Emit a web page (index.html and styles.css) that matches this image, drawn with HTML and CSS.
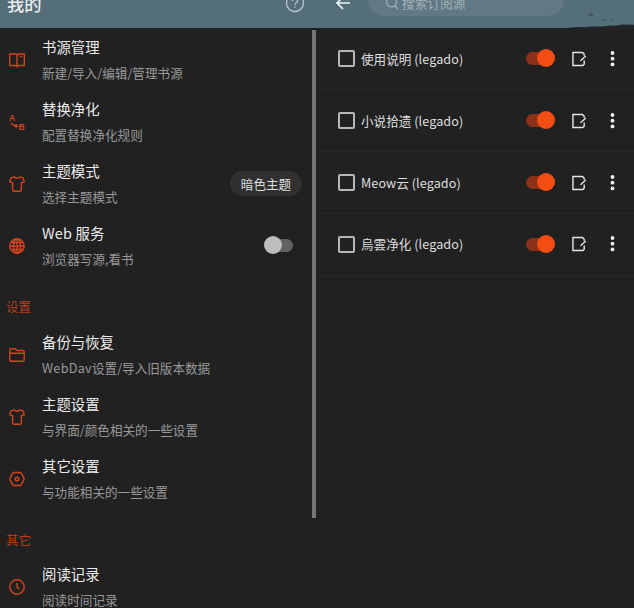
FILE: index.html
```html
<!DOCTYPE html>
<html lang="zh-CN">
<head>
<meta charset="utf-8">
<title>我的</title>
<link rel="stylesheet" href="styles.css">
</head>
<body>
<svg class="defs" aria-hidden="true">
  <symbol id="shirt" viewBox="0 0 16 16"><path d="M5.2.8C6 2.700 10 2.700 10.800.8L14 1.800l1.300 4.100-2.900.7v7.200q0 1.400-1.400 1.400H5q-1.400 0-1.400-1.400V6.600L.7 5.900 2 1.800z"/></symbol>
  <symbol id="edit" viewBox="0 0 16 16"><path d="M13 4.500V3l-1.800-2H1v14h10.500l1.500-1.500V9.500M14.800 4.800 9 9.800"/></symbol>
</svg>
<div class="app">
  <main class="pane mine">
    <header class="bar"><h1>我的</h1>
      <svg class="help" viewBox="0 0 20 20"><circle cx="10" cy="10" r="8.500"/><path d="M7.500 8c0-3.200 5-3.200 5-.3 0 1.900-2.500 2-2.500 4.300M10 13.500v1.200"/></svg>
    </header>
    <div class="row"><svg class="ico" viewBox="0 0 16 16"><path d="M8 3v12M.7 2h5Q8 2 8 3.500 8 2 10.300 2h5v11.500h-5Q8 13.500 8 15q0-1.500-2.300-1.500h-5zM11 4.500h2"/></svg><div class="txt"><h2>书源管理</h2><p>新建/导入/编辑/管理书源</p></div></div>
    <div class="row"><svg class="ico letters" viewBox="0 0 16 16"><text x="0" y="6.500">A</text><text x="9.500" y="15.800">B</text><path d="M2.500 9q1 3 5.500 3M6.500 10.300 8.300 12l-1.800 1.600"/></svg><div class="txt"><h2>替换净化</h2><p>配置替换净化规则</p></div></div>
    <div class="row"><svg class="ico"><use href="#shirt"/></svg><div class="txt"><h2>主题模式</h2><p>选择主题模式</p></div><span class="chip">暗色主题</span></div>
    <div class="row"><svg class="ico" viewBox="0 0 16 16"><circle cx="8" cy="8" r="7.200"/><ellipse cx="8" cy="8" rx="3.500" ry="7.200"/><path d="M8 .8v14.400M1 8h14M2 4.500h12M2 11.500h12"/></svg><div class="txt"><h2 class="web">Web 服务</h2><p>浏览器写源,看书</p></div><span class="switch off"></span></div>
    <h3>设置</h3>
    <div class="row"><svg class="ico" viewBox="0 0 16 16"><path d="M.8 13V3q0-1.300 1.300-1.300h4L8 3.500h5.900q1.300 0 1.300 1.300V13q0 1.300-1.300 1.300H2.100Q.8 14.300.8 13zM.8 6.300h14.400"/></svg><div class="txt"><h2>备份与恢复</h2><p><span class="latin">WebDav</span>设置/导入旧版本数据</p></div></div>
    <div class="row"><svg class="ico"><use href="#shirt"/></svg><div class="txt"><h2>主题设置</h2><p>与界面/颜色相关的一些设置</p></div></div>
    <div class="row"><svg class="ico" viewBox="0 0 16 16"><path d="M4.800 1.500h6.400q.7 0 1 .6l2.800 5.200q.4.700 0 1.400l-2.800 5.200q-.3.600-1 .6H4.800q-.7 0-1-.6L1 8.700q-.4-.7 0-1.400l2.800-5.200q.3-.6 1-.6z"/><circle cx="8" cy="8" r="1.800"/></svg><div class="txt"><h2>其它设置</h2><p>与功能相关的一些设置</p></div></div>
    <h3>其它</h3>
    <div class="row"><svg class="ico" viewBox="0 0 16 16"><circle cx="8" cy="8" r="7.200"/><path d="M8 4v4.300l2.500 1.900"/></svg><div class="txt"><h2>阅读记录</h2><p>阅读时间记录</p></div></div>
    <i class="scroll"></i>
  </main>
  <section class="pane subs">
    <header class="bar">
      <svg class="back" viewBox="0 0 16 16"><path d="M15 8H2M8 2 2 8l6 6"/></svg>
      <div class="search"><svg viewBox="0 0 14 14"><circle cx="6.500" cy="6" r="5"/><path d="m10 10 3 3"/></svg><span>搜索订阅源</span></div>
      <svg class="ink" viewBox="0 0 68 30"><path d="M3 29v-1.300q8-.9 16-.4l6-.8 10 .1q9-1.100 17-1l4-1.200 12 .3v4.300z"/><path class="dots" d="M22 14.500h5v1.500h-5zM24 12.500h2v1h-2zM37 19.500h3v1.500h-3zM45 20h2v1h-2zM41 4h2v1h-2z"/></svg>
    </header>
    <div class="item"><i class="box"></i><span class="name">使用说明 <b>(legado)</b></span><span class="switch on"></span><svg class="edit"><use href="#edit"/></svg><svg class="more" viewBox="0 0 4 16"><circle cx="2" cy="2" r="1.900"/><circle cx="2" cy="7.700" r="1.900"/><circle cx="2" cy="13.400" r="1.900"/></svg></div>
    <div class="item"><i class="box"></i><span class="name">小说拾遗 <b>(legado)</b></span><span class="switch on"></span><svg class="edit"><use href="#edit"/></svg><svg class="more" viewBox="0 0 4 16"><circle cx="2" cy="2" r="1.900"/><circle cx="2" cy="7.700" r="1.900"/><circle cx="2" cy="13.400" r="1.900"/></svg></div>
    <div class="item"><i class="box"></i><span class="name"><b>Meow</b>云 <b>(legado)</b></span><span class="switch on"></span><svg class="edit"><use href="#edit"/></svg><svg class="more" viewBox="0 0 4 16"><circle cx="2" cy="2" r="1.900"/><circle cx="2" cy="7.700" r="1.900"/><circle cx="2" cy="13.400" r="1.900"/></svg></div>
    <div class="item"><i class="box"></i><span class="name">烏雲净化 <b>(legado)</b></span><span class="switch on"></span><svg class="edit"><use href="#edit"/></svg><svg class="more" viewBox="0 0 4 16"><circle cx="2" cy="2" r="1.900"/><circle cx="2" cy="7.700" r="1.900"/><circle cx="2" cy="13.400" r="1.900"/></svg></div>
  </section>
</div>
</body>
</html>
```
FILE: styles.css
```css
* { box-sizing: border-box; }
body { margin: 0; background: #212121; color: #ececec; font-family: "Noto Sans CJK SC", sans-serif; }
h1, h2, h3, p { margin: 0; font-weight: 400; white-space: nowrap; }
svg { fill: none; stroke: currentColor; flex: none; }
.defs { position: absolute; width: 0; height: 0; }
.app { display: grid; grid-template-columns: 316px 318px; height: 608px; overflow: hidden; }
.pane { position: relative; height: 608px; overflow: hidden; }
.bar { position: relative; display: flex; height: 28px; background: #546e7a; }

.mine .bar { justify-content: space-between; padding: 0 11px 0 7px; }
h1 { margin-top: -8px; font-size: 17.3px; font-weight: 500; line-height: 24px; }
.help { width: 20px; height: 20px; margin-top: -7px; color: #b9c5ca; stroke-width: 1.3; }

.row { display: flex; height: 62px; padding: 0 14px 0 9px; }
.ico { width: 16px; height: 16px; margin-top: 24px; color: #d2451e; stroke-width: 1.4; stroke-linejoin: round; overflow: visible; }
.letters text { fill: currentColor; stroke: none; font: 700 8.500px "Liberation Sans", sans-serif; }
.txt { flex: 1; padding: 8px 0 0 17px; }
h2 { font-size: 14.4px; line-height: 21px; }
.web { letter-spacing: .2px; }
p { margin-top: 7px; font-size: 12.6px; line-height: 18px; color: #999; }
.latin { letter-spacing: .3px; }
.chip { width: 72px; height: 25px; margin-top: 19px; border-radius: 13px; background: #303030; color: #dedede; font-size: 12.6px; line-height: 25px; text-align: center; }
h3 { height: 46.5px; padding: 22px 0 0 6px; font-size: 12.5px; line-height: 18px; color: #b83e1d; }
.scroll { position: absolute; left: 312px; top: 30px; width: 4px; height: 488px; background: #757575; }

.switch { position: relative; width: 29px; height: 19px; }
.switch::before, .switch::after { content: ""; position: absolute; border-radius: 50px; }
.switch::before { top: 3px; height: 13px; width: 26px; }
.switch::after { top: 0; width: 18px; height: 18px; }
.off { margin: 22px 9px 0 0; }
.off::before { right: 0; background: #626262; }
.off::after { left: 0; background: #bdbdbd; }
.on::before { left: 0; background: #8b3117; }
.on::after { right: 0; background: #f44d14; }

.back { width: 16px; height: 16px; margin: -5px 0 0 19px; color: #f0f3f4; stroke-width: 1.7; }
.search { display: flex; width: 196px; height: 32px; margin: -16px 0 0 17px; padding: 11px 0 0 17px; border-radius: 16px; background: #607984; color: #a3b1b7; font-size: 12.7px; line-height: 16px; }
.search svg { width: 14px; height: 14px; margin: 1px 3px 0 0; stroke-width: 1.2; }
.ink { position: absolute; right: 0; top: 0; width: 68px; height: 30px; fill: #212527; stroke: none; }
.dots { fill: #3d525c; }

.subs .bar { margin-bottom: .6px; }
.item { display: flex; align-items: center; height: 61.8px; padding-left: 22px; border-bottom: 1px solid #282828; }
.box { width: 17px; height: 17px; border: 2px solid #b7b7b7; border-radius: 2px; }
.name { width: 165px; margin-left: 6px; font-size: 12.6px; line-height: 18px; white-space: nowrap; color: #dedede; }
.name b { font-weight: 400; letter-spacing: .1px; }
.edit { width: 15px; height: 16px; margin-left: 17px; color: #e7e7e7; stroke-width: 1.5; }
.more { width: 5px; height: 16px; margin-left: 23px; fill: #f0f0f0; stroke: none; }
```
